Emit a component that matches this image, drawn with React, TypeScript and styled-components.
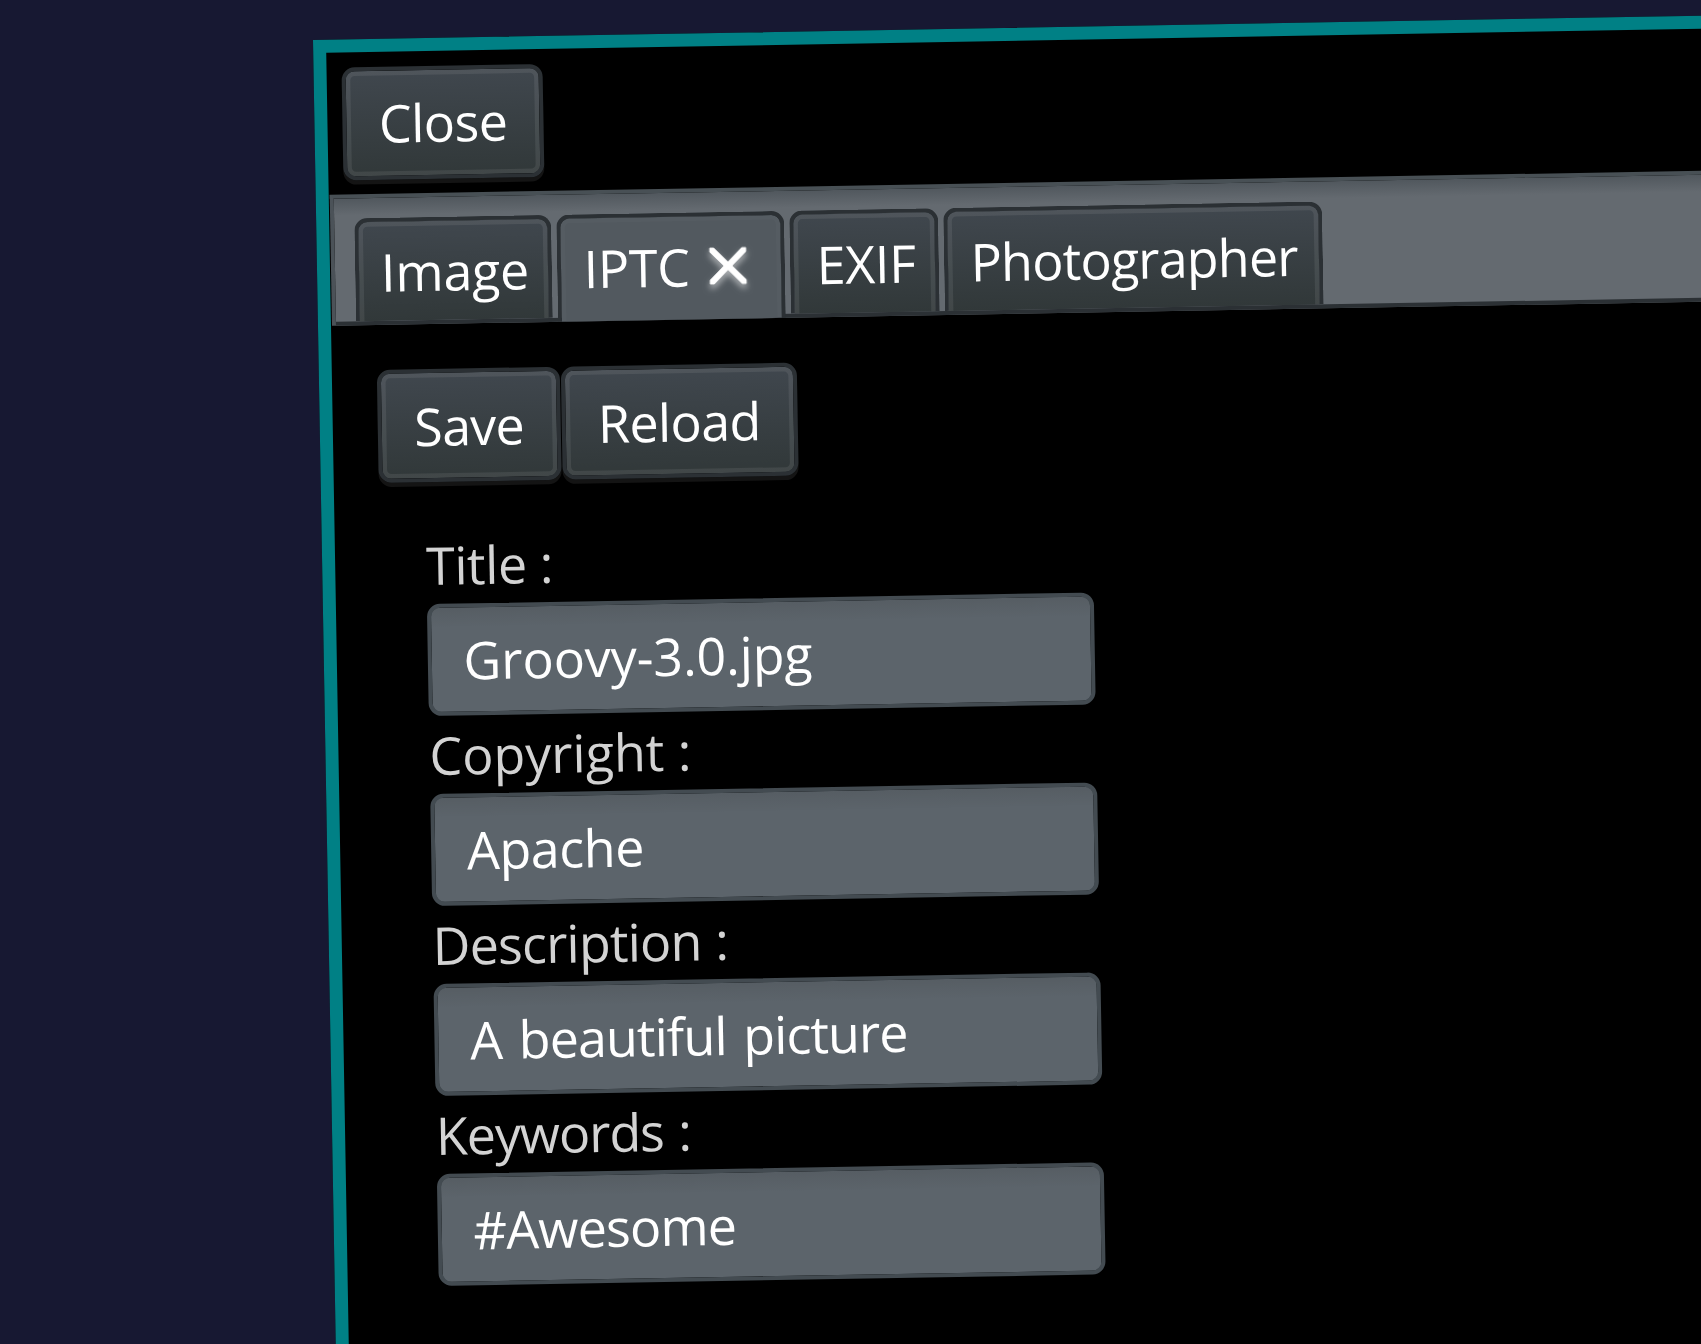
import React from "react";
import styled, { createGlobalStyle } from "styled-components";

const line = "4px";

const GlobalStyle = createGlobalStyle`
  html, body { margin: 0; padding: 0; background: #171832; overflow: hidden; }
  * { box-sizing: border-box; }
`;

const Stage = styled.main`
  width: 1701px;
  height: 1344px;
  padding: 40px 0 0 313.3px;
  overflow: hidden;
  background: #171832;
  font-family: "Open Sans", "Noto Sans", sans-serif;
  font-size: 52px;
  line-height: 1;
  color: #fff;
`;

const Window = styled.section`
  display: flex;
  flex-direction: column;
  width: 1500px;
  height: 1400px;
  padding: 14.7px 1.4px;
  border: 13px solid #008085;
  background: #000;
  transform: rotate(-1deg);
  transform-origin: 0 0;
`;

const Toolbar = styled.div`
  display: flex;
  height: 127.6px;
  padding-left: 14px;
`;

const Text = styled.span<{ $track?: number; $word?: number }>`
  letter-spacing: ${(p) => p.$track ?? 0}px;
  word-spacing: ${(p) => p.$word ?? 0}px;
  white-space: pre;
`;

const Button = styled.button<{ $width: number }>`
  display: flex;
  align-items: center;
  flex: none;
  width: ${(p) => p.$width}px;
  height: 113px;
  padding: 0.6px 0 0 32px;
  border: ${line} solid #2b3034;
  border-radius: 13px;
  background:
    linear-gradient(#40474e, #313839) padding-box,
    linear-gradient(#2b3034, #2b3034) border-box;
  box-shadow: inset 0 0 0 4.6px rgba(255, 255, 255, 0.08), 0 4.3px 0 #141414;
  font: inherit;
  color: inherit;
`;

const TabBar = styled.nav`
  display: flex;
  align-items: flex-end;
  flex: none;
  gap: 5px;
  height: 130.8px;
  padding-left: 19.2px;
  border-top: ${line} solid #485055;
  border-left: ${line} solid #4b5258;
  background:
    linear-gradient(#2b3034, #2b3034) bottom / 100% ${line} no-repeat,
    linear-gradient(#4c5359, #646a70 21px) border-box;
`;

const Tab = styled.div<{ $width: number; $active?: boolean }>`
  position: relative;
  display: flex;
  align-items: center;
  flex: none;
  gap: 19px;
  width: ${(p) => p.$width}px;
  height: ${(p) => (p.$active ? 107 : 103)}px;
  margin-bottom: ${(p) => (p.$active ? "0px" : line)};
  padding: ${(p) => (p.$active ? "0 0 2.5px 22.4px" : "0.4px 0 0 22.4px")};
  border: ${line} solid #2b3034;
  border-bottom: 0;
  border-radius: 13px 13px 0 0;
  background:
    linear-gradient(${(p) => (p.$active ? "#52595f, #52595f" : "#40474e, #313839")}) padding-box,
    linear-gradient(#2b3034, #2b3034) border-box;
  overflow: hidden;

  &::before {
    content: "";
    position: absolute;
    inset: 0 0 -12px 0;
    border-radius: 9px;
    box-shadow: inset 0 0 0 4.6px rgba(255, 255, 255, ${(p) => (p.$active ? 0.02 : 0.08)});
  }
`;

const CloseMark = styled.svg`
  flex: none;
  width: 38px;
  height: 38px;
  overflow: visible;
  filter: drop-shadow(0 4px 3px rgba(255, 255, 255, 0.55));
`;

const Panel = styled.div`
  display: flex;
  flex-direction: column;
  padding: 44.8px 0 0 44.1px;
`;

const Actions = styled.div`
  display: flex;
  gap: 0.6px;
`;

const Form = styled.div`
  display: flex;
  flex-direction: column;
  padding: 44.2px 0 0 45.2px;
`;

const Field = styled.div`
  display: flex;
  flex-direction: column;
  height: 190.1px;
`;

const FieldLabel = styled.div`
  display: flex;
  align-items: center;
  height: 77.6px;
  padding-left: 0.2px;
  color: #d3d3d3;
`;

const FieldValue = styled.div`
  display: flex;
  align-items: center;
  width: 667px;
  height: 112.8px;
  padding-left: 32px;
  border: ${line} solid #434b51;
  border-radius: 13px;
  background:
    linear-gradient(#565d63, #5c646b 20px) padding-box,
    linear-gradient(#434b51, #434b51) border-box;
`;

const tabs = [
  { name: "Image", width: 197.6, track: -0.2 },
  { name: "IPTC", width: 228, track: -0.3, active: true },
  { name: "EXIF", width: 149, track: -0.3 },
  { name: "Photographer", width: 378.8, track: -0.8 },
];

const fields = [
  { label: "Title :", labelTrack: -0.4, value: "Groovy-3.0.jpg", track: -0.1 },
  { label: "Copyright :", labelTrack: 0, value: "Apache", track: -0.4 },
  { label: "Description :", labelTrack: -0.8, labelWord: 1, value: "A beautiful picture", track: -0.9, word: 4 },
  { label: "Keywords :", labelTrack: -1.1, labelWord: 2, value: "#Awesome", track: -0.85 },
];

export default function App() {
  return (
    <>
      <GlobalStyle />
      <Stage>
        <Window>
          <Toolbar>
            <Button $width={200.6}>
              <Text $track={-0.5}>Close</Text>
            </Button>
          </Toolbar>
          <TabBar>
            {tabs.map((t) => (
              <Tab key={t.name} $width={t.width} $active={t.active}>
                <Text $track={t.track}>{t.name}</Text>
                {t.active && (
                  <CloseMark viewBox="0 0 38 38" aria-label="Close tab">
                    <path
                      d="M1 1H5L19 15.2 33 1H37V5L22.9 19 37 33V37H33L19 22.8 5 37H1V33L15.1 19 1 5Z"
                      fill="#fff"
                      stroke="#fff"
                      strokeWidth="0.8"
                    />
                  </CloseMark>
                )}
              </Tab>
            ))}
          </TabBar>
          <Panel>
            <Actions>
              <Button $width={183}>
                <Text $track={-0.7}>Save</Text>
              </Button>
              <Button $width={236.4}>
                <Text $track={-0.6}>Reload</Text>
              </Button>
            </Actions>
            <Form>
              {fields.map((f) => (
                <Field key={f.label}>
                  <FieldLabel>
                    <Text $track={f.labelTrack} $word={f.labelWord}>
                      {f.label}
                    </Text>
                  </FieldLabel>
                  <FieldValue>
                    <Text $track={f.track} $word={f.word}>
                      {f.value}
                    </Text>
                  </FieldValue>
                </Field>
              ))}
            </Form>
          </Panel>
        </Window>
      </Stage>
    </>
  );
}
